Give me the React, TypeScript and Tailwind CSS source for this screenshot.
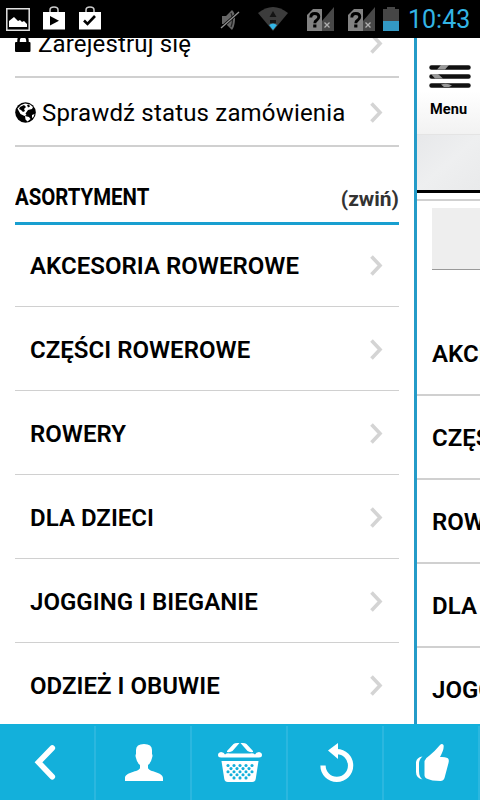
import React from "react";

const categories = ["AKCESORIA ROWEROWE", "CZĘŚCI ROWEROWE", "ROWERY", "DLA DZIECI", "JOGGING I BIEGANIE", "ODZIEŻ I OBUWIE"];

function Chevron() {
  return (
    <svg className="mr-[16px] h-[21px] w-[13px] shrink-0" viewBox="0 0 13 21" fill="none">
      <path d="M1.5 1.5 10 10.5 1.5 19.5" stroke="#d4d4d4" strokeWidth="3.6" />
    </svg>
  );
}

function StoreIcon({ check = false }: { check?: boolean }) {
  return (
    <svg className="h-[24px] w-[24px]" viewBox="0 0 24 24" fill="none">
      <path d="M8 6V4q0-3 4-3t4 3v2" stroke="#ccc" strokeWidth="1.5" />
      <path d="M1 6h22v17.500H1z" fill="#fff" />
      {check ? <path d="m6 14.500 3.500 3.500L17 10" stroke="#000" strokeWidth="2.6" /> : <path d="M8 10v9.500l9-4.750z" fill="#000" />}
    </svg>
  );
}

function SimIcon() {
  return (
    <svg className="h-[24px] w-[27px]" viewBox="0 0 27 24">
      <path d="M0 8 6 2h9v22H0z" fill="#828282" />
      <path d="M27 0v24H15V14z" fill="#484848" />
      <path d="m17.500 15.500 5 5m0-5-5 5" stroke="#b0b0b0" strokeWidth="1.3" />
      <path d="M3.800 10.500q0-4 4-4t4 3.300q0 2-2.200 3.400-1.800 1.100-1.800 3" fill="none" stroke="#000" strokeWidth="2.900" />
      <path d="M6.200 17.500h3.200v3H6.200z" />
    </svg>
  );
}

function StatusBar() {
  return (
    <header className="flex h-[38px] shrink-0 items-center bg-black">
      <svg className="ml-[6px] mt-[1px] h-[23px] w-[24px]" viewBox="0 0 24 23">
        <path d="M.8.8h22.400v21.400H.8z" fill="none" stroke="#e2e2e2" strokeWidth="1.5" />
        <path d="M3 19v-6l5-4 4 4 2-1 2 2 2-1 3 3v3z" fill="#fff" />
      </svg>
      <div className="ml-[12px] flex gap-[12px] pb-[3px]"><StoreIcon /><StoreIcon check /></div>
      <svg className="ml-[118px] mt-[1px] h-[22px] w-[20px]" viewBox="0 0 20 22">
        <path d="M2 7h4l6-6q3.500 3 3 10t-3 10l-6-6H2z" fill="#666" />
        <path d="M11 4q3 7 0 14" fill="none" stroke="#222" strokeWidth="1.2" />
        <path d="m1 19 18-16" stroke="#000" strokeWidth="3" />
        <path d="m1 19 18-16" stroke="#929292" strokeWidth="1.4" />
      </svg>
      <svg className="ml-[18px] h-[24px] w-[30px]" viewBox="0 0 30 24">
        <path d="M0 6q15-12 30 0L15 24z" fill="#3c3c3c" />
        <path d="m15 4 3.500 6h-7zM12 13h6v3h-6z" fill="#141414" />
        <path d="M11 18q4-3 8 0l-4 5z" fill="#33b5e5" />
      </svg>
      <div className="ml-[19px] flex gap-[14px]"><SimIcon /><SimIcon /></div>
      <svg className="ml-[8px] h-[24px] w-[16px]" viewBox="0 0 16 24">
        <path d="M4 0h8v2h4v22H0V2h4z" fill="#464646" />
        <path d="M0 14h16v10H0z" fill="#3399c4" />
      </svg>
      <span className="ml-[9px] pt-[1px] text-[25px] leading-none text-[#33b5e5]">10:43</span>
    </header>
  );
}

function SideMenu() {
  return (
    <nav className="w-[414px] shrink-0 px-[15px]">
      <div className="-mt-[29px] flex h-[69px] items-center border-b-2 border-[#d0d0d0] pt-[2px]">
        <svg className="mr-[7px] h-[20px] w-[16px]" viewBox="0 0 16 20">
          <path d="M3.500 10V7q0-5 4.500-5t4.500 5v3" fill="none" stroke="#000" strokeWidth="2.5" />
          <rect y="8" width="15.500" height="10" rx="1" />
        </svg>
        <span className="grow text-[24px] tracking-[0.15px]">Zarejestruj się</span>
        <Chevron />
      </div>
      <div className="flex h-[69px] items-center border-b-2 border-[#d0d0d0] pt-[2px]">
        <svg className="mr-[6px] h-[21px] w-[21px]" viewBox="0 0 21 21">
          <circle cx="10.5" cy="10.5" r="10.3" />
          <path d="M2.500 6.500 6 3l4-1.500 5 1 3 2.500-1 2-4 1-2.500 3.500 1 1.500-2 1-4-2-2-3.500zM10 14l4 1 1.500 2-3 2.500-2-2zM17 13l2.500-1-1 3-1.500 1z" fill="#fff" />
          <path d="m5 5 4-2 2 2-2 2 1 2-2 1-2-2-2-1zM12 3l2-.5 1 2-2 1z" />
        </svg>
        <span className="grow text-[24px] tracking-[0.18px]">Sprawdź status zamówienia</span>
        <Chevron />
      </div>
      <div className="flex h-[78px] items-end justify-between border-b-3 border-[#189fd0] pb-[11px]">
        <h2 className="w-[150px] origin-left scale-x-[.85] whitespace-nowrap text-[24px] font-bold leading-[28px]">ASORTYMENT</h2>
        <span className="text-[21px] font-bold leading-[24px] text-[#333]">(zwiń)</span>
      </div>
      <ul className="-mt-[2px]">
        {categories.map((name) => (
          <li key={name} className="flex h-[84px] items-center justify-between border-b border-[#d0d0d0] pl-[15px] pt-[2px]">
            <span className="whitespace-nowrap text-[24px] font-semibold tracking-[0.03px]">{name}</span>
            <Chevron />
          </li>
        ))}
      </ul>
    </nav>
  );
}

function ShiftedPage() {
  return (
    <main className="w-[66px] shrink-0 overflow-hidden border-l-3 border-[#249bc8]">
      <div className="h-[97px] border-b border-[#e4e4e4] bg-gradient-to-b from-white from-55% to-[#f2f2f2] pl-[12px] pt-[27px]">
        <svg className="h-[23px] w-[42px]" viewBox="0 0 42 23">
          <g stroke="#111" strokeWidth="4.5" strokeLinecap="round"><path d="M2.5 2.5h37M2.5 11.5h37M2.5 20.5h37" /></g>
          <path d="M8 4.500 12 0h8l-4 4.500zM2 9h7l5 4.500H6zM12 19.500q6-2 11 1l-3 1.500h-5z" fill="#999" />
        </svg>
        <div className="mt-[13px] pl-[1px] text-[14.500px] font-bold leading-[18px] tracking-[0.1px]">Menu</div>
      </div>
      <div className="h-[58px] border-b-3 border-black bg-gradient-to-br from-[#e7e8ea] via-[#eeeff0] to-[#e9eaeb]" />
      <div className="mt-[6px] h-[2px] bg-[#d0d0d0]" />
      <div className="ml-[15px] mt-[7px] h-[62px] w-[60px] border-b border-[#999] bg-[#eee]" />
      <ul className="mt-[42px]">
        {categories.map((name) => (
          <li key={name} className="flex h-[84px] items-center border-b-2 border-[#d0d0d0] pl-[15px] pt-[1px]">
            <span className="whitespace-nowrap text-[24px] font-semibold tracking-[0.03px]">{name}</span>
          </li>
        ))}
      </ul>
    </main>
  );
}

const holeRows = [0, 1, 2, 3, 4];

function Tile({ children }: { children: React.ReactNode }) {
  return (
    <div className="h-[74px] w-[96px] shrink-0 border-r-2 border-[#2bb7df]">
      <svg className="h-[74px] w-[94px]" viewBox="0 2 94 74">{children}</svg>
    </div>
  );
}

function Toolbar() {
  return (
    <footer className="flex h-[76px] shrink-0 bg-[#13b0db] pt-[2px]">
      <Tile><path d="M52.300 24 38.500 38.300 52.300 52.700" fill="none" stroke="#fff" strokeWidth="5.600" strokeLinecap="round" /></Tile>
      <Tile><path d="M48 20q8 0 8 6v4q1 1 0 4-1 5-4 7v3c1 4 15 4 15 10v3H29v-3c0-6 14-6 15-10v-3q-3-2-4-7-1-3 0-4v-4q0-6 8-6z" fill="#fff" /></Tile>
      <Tile>
        <g fill="#fff">
          <path d="m35 27 6.500-7q1.500-1.500 6-1l-7 8q-2 1.500-5.500 1zM61 27l-6.500-7q-1.500-1.500-6-1l7 8q2 1.500 5.500 1z" />
          <path d="M29 28q3 0 4 2.500 2-2 5-1h20q3-1 5 1 1-2.500 4-2.500 3 .5 3 3t-3 2.500H29q-3 0-3-2.500t3-3z" />
          <path d="M29.500 37h37l-2.800 18q-.5 3-3.500 3H35.800q-3 0-3.500-3z" />
        </g>
        <g fill="#13b0db">
          {holeRows.map((row) => Array.from({ length: row % 2 ? 4 : row === 4 ? 3 : 5 }, (_, i) => (
            <circle key={`${row}-${i}`} cx={36 + (row % 2 ? 3 : row === 4 ? 6 : 0) + i * 6} cy={41.5 + row * 3.100} r="1.550" />
          )))}
        </g>
      </Tile>
      <Tile><path d="M35 41.500a13.800 13.800 0 1 0 13.800-13.800" fill="none" stroke="#fff" strokeWidth="5.300" /><path d="m40 26.500 10-7.500v16z" fill="#fff" /></Tile>
      <Tile>
        <path d="M40.500 37q1-3 5-5.500Q51 27 56 21q2-2 3.500 0 1 4-3.500 12 4-.5 7.500 1 2 1 1 5l-4 15q-1 3-4 3-9 0-14-2.500-2-1-2-3z" fill="#fff" />
        <path d="M38.500 32.500Q33 33 32 38v10q0 6 6.500 7.500Q35 53 35 47v-7q0-5 3.500-7.500z" fill="#fff" />
      </Tile>
    </footer>
  );
}

export default function App() {
  return (
    <div className="flex h-[800px] w-[480px] flex-col overflow-hidden bg-white font-[Roboto,sans-serif] text-black">
      <StatusBar />
      <div className="flex h-[686px] shrink-0 overflow-hidden"><SideMenu /><ShiftedPage /></div>
      <Toolbar />
    </div>
  );
}
